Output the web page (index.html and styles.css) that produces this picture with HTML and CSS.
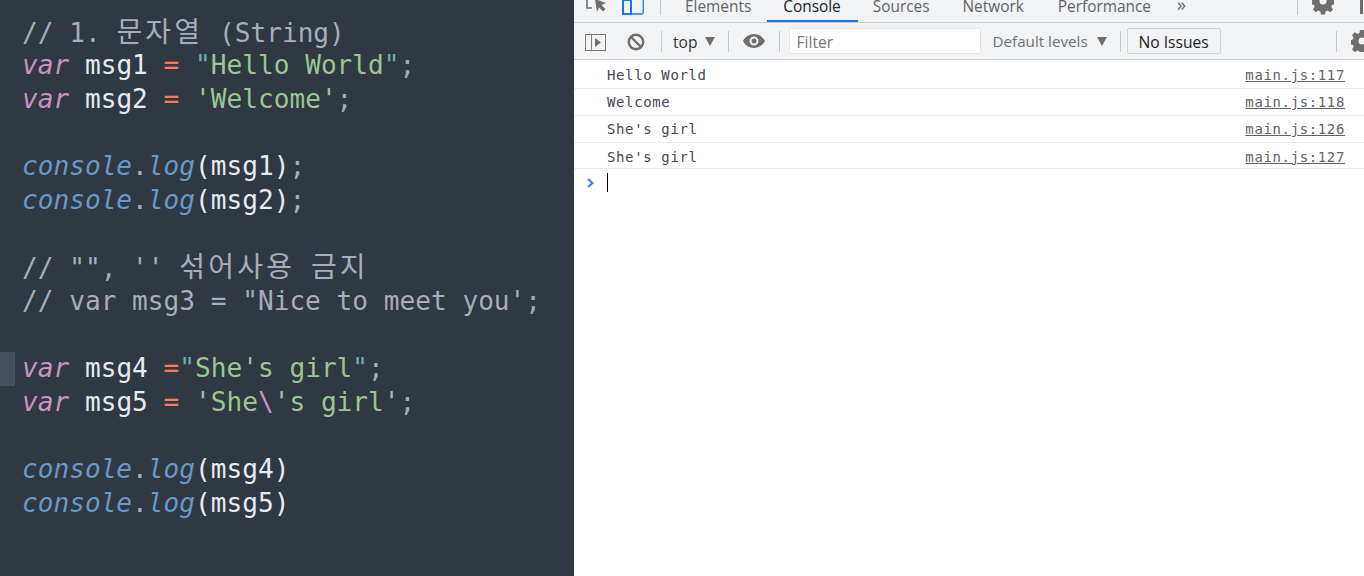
FILE: index.html
```html
<!DOCTYPE html>
<html lang="ko">
<head>
<meta charset="utf-8">
<title>Console</title>
<link rel="stylesheet" href="styles.css">
</head>
<body>
<main class="app">
<section class="editor">
<div class="line"><span class="c">// 1. <span class="ko">문자열</span> (String)</span></div>
<div class="line"><span class="k">var</span> <span class="v">msg1</span> <span class="o">=</span> <span class="q">"</span><span class="s">Hello World</span><span class="q">"</span><span class="p">;</span></div>
<div class="line"><span class="k">var</span> <span class="v">msg2</span> <span class="o">=</span> <span class="s">'Welcome'</span><span class="p">;</span></div>
<div class="line"></div>
<div class="line"><span class="f">console</span><span class="p">.</span><span class="f">log</span><span class="v">(msg1)</span><span class="p">;</span></div>
<div class="line"><span class="f">console</span><span class="p">.</span><span class="f">log</span><span class="v">(msg2)</span><span class="p">;</span></div>
<div class="line"></div>
<div class="line"><span class="c">// "", '' <span class="ko">섞어사용</span> <span class="ko">금지</span></span></div>
<div class="line"><span class="c">// var msg3 = "Nice to meet you';</span></div>
<div class="line"></div>
<div class="line mark"><span class="k">var</span> <span class="v">msg4</span> <span class="o">=</span><span class="q">"</span><span class="s">She's girl</span><span class="q">"</span><span class="p">;</span></div>
<div class="line"><span class="k">var</span> <span class="v">msg5</span> <span class="o">=</span> <span class="s">'She</span><span class="e">\</span><span class="s">'s girl'</span><span class="p">;</span></div>
<div class="line"></div>
<div class="line"><span class="f">console</span><span class="p">.</span><span class="f">log</span><span class="v">(msg4)</span></div>
<div class="line"><span class="f">console</span><span class="p">.</span><span class="f">log</span><span class="v">(msg5)</span></div>
</section>
<section class="devtools">
<header class="tabs">
<svg class="ic inspect" width="22" height="22" viewBox="0 0 22 22"><path d="M1 0v11h5" fill="none" stroke="#6e6e6e" stroke-width="1.6"/><path d="M9 2l11 4-4.500 2 4 4-2.500 2.500-4-4-2 4.500z" fill="#6e6e6e"/></svg>
<svg class="ic device" width="22" height="22" viewBox="0 0 22 22"><rect x="0.800" y="-4" width="20.400" height="19" rx="1.500" fill="none" stroke="#1a73e8" stroke-width="1.300"/><rect x="1" y="1" width="8" height="14" fill="none" stroke="#1a73e8" stroke-width="2"/></svg>
<i class="sep tall first"></i>
<span class="tab t-el">Elements</span>
<span class="tab active">Console</span>
<span class="tab t-so">Sources</span>
<span class="tab t-ne">Network</span>
<span class="tab t-pe">Performance</span>
<span class="more">»</span>
<i class="sep tall last"></i>
<svg class="ic gear" width="22" height="22" viewBox="0 0 22 22"><path fill="#6e6e6e" fill-rule="evenodd" d="M9-6h4l.6 3 2 .9 2.600-1.700 2.800 2.800-1.700 2.600.9 2 3 .6v4l-3 .6-.9 2 1.700 2.600-2.800 2.800-2.600-1.700-2 .9-.6 3H9l-.6-3-2-.9-2.600 1.700-2.800-2.800 1.700-2.600-.9-2-3-.6v-4l3-.6.9-2-1.700-2.600 2.800-2.800 2.600 1.700 2-.9zM11 1.500a3.500 3.500 0 100 7 3.500 3.500 0 000-7z"/></svg>
<span class="dots"></span>
</header>
<div class="toolbar">
<svg class="ic sidebar" width="21" height="17" viewBox="0 0 21 17"><rect x="0.500" y="0.500" width="20" height="16" fill="none" stroke="#7a7a7a"/><path d="M6.500 0v17" stroke="#7a7a7a"/><path d="M10 4l6 4.500-6 4.500z" fill="#6e6e6e"/></svg>
<svg class="ic block" width="18" height="18" viewBox="0 0 18 18"><circle cx="9" cy="9" r="7.200" fill="none" stroke="#6e6e6e" stroke-width="2.400"/><path d="M4 4l10 10" stroke="#6e6e6e" stroke-width="2.400"/></svg>
<i class="sep s1"></i>
<span class="label top">top</span>
<i class="tri t1"></i>
<i class="sep s2"></i>
<svg class="ic eye" width="22" height="14" viewBox="0 0 22 14"><path fill="#6e6e6e" fill-rule="evenodd" d="M11 0c5 0 9 3.200 11 7-2 3.800-6 7-11 7S2 10.800 0 7c2-3.800 6-7 11-7zm0 2.500a4.500 4.500 0 100 9 4.500 4.500 0 000-9zm0 2a2.500 2.500 0 110 5 2.500 2.500 0 010-5z"/></svg>
<i class="sep s3"></i>
<div class="filter">Filter</div>
<span class="label levels">Default levels</span>
<i class="tri t2"></i>
<i class="sep s4"></i>
<div class="issues">No Issues</div>
<i class="sep s5"></i>
<svg class="ic gear2" width="22" height="22" viewBox="0 0 22 22"><path fill="#6e6e6e" fill-rule="evenodd" d="M9 0h4l.6 3 2 .9 2.600-1.700 2.800 2.800-1.700 2.600.9 2 3 .6v4l-3 .6-.9 2 1.700 2.600-2.800 2.800-2.600-1.700-2 .9-.6 3H9l-.6-3-2-.9-2.600 1.700-2.800-2.800 1.700-2.600-.9-2-3-.6v-4l3-.6.9-2-1.700-2.600 2.800-2.800 2.600 1.700 2-.9zM11 7.500a3.500 3.500 0 100 7 3.500 3.500 0 000-7z"/></svg>
</div>
<div class="log">
<div class="row r1"><span>Hello World</span><a>main.js:117</a></div>
<div class="row r2"><span>Welcome</span><a>main.js:118</a></div>
<div class="row r3"><span>She's girl</span><a>main.js:126</a></div>
<div class="row r4"><span>She's girl</span><a>main.js:127</a></div>
<div class="prompt"><svg width="9" height="10" viewBox="0 0 9 10"><path d="M2 1l4.500 4L2 9" fill="none" stroke="#2f7cf0" stroke-width="2"/></svg><i class="caret"></i></div>
</div>
</section>
</main>
</body>
</html>
```
FILE: styles.css
```css
* { box-sizing: border-box; }
html, body { margin: 0; height: 100%; overflow: hidden; }
.app { display: flex; width: 1364px; height: 576px; }
.editor {
  width: 574px; flex: none; background: #303841; padding: 15.500px 0 0 22px;
  font: 26.130px/33.700px "DejaVu Sans Mono", monospace; color: #d8dee9;
}
.line { height: 33.700px; position: relative; white-space: pre; }
.mark::before { content: ""; position: absolute; left: -22px; top: 0; width: 15px; height: 34px; background: #44525b; }
.c { color: #a7adba; }
.ko { font-family: "Noto Sans CJK KR", sans-serif; font-size: 28px; letter-spacing: 3.200px; line-height: 1; }
.k { color: #c594c5; font-style: italic; }
.v { color: #e6ebf2; }
.o { color: #f97b58; }
.q { color: #5fb4b4; }
.s { color: #99c794; }
.e { color: #c594c5; }
.p { color: #a7adba; }
.f { color: #6699cc; font-style: italic; }

.devtools { flex: 1; min-width: 0; display: flex; flex-direction: column; background: #fff; font-family: "Open Sans", sans-serif; }
.tabs { height: 23px; flex: none; display: flex; background: #f1f3f4; border-bottom: 1px solid #cbcdd0; position: relative; overflow: hidden; font-size: 15.400px; color: #5f6368; }
.tab { line-height: 13px; height: 22px; white-space: nowrap; flex: none; }
.ic { flex: none; display: block; }
.inspect { margin: -3px 0 0 12px; }
.device { margin: -1px 0 0 14px; }
.sep { display: block; width: 1px; flex: none; background: #c4c6c9; }
.sep.tall { height: 15px; }
.first { margin-left: 16px; }
.t-el { margin-left: 24px; }
.active { color: #202124; padding: 0 17px 0 16px; margin-left: 16px; border-bottom: 2px solid #1a73e8; }
.t-so { margin-left: 15px; }
.t-ne { margin-left: 33px; }
.t-pe { margin-left: 34px; }
.more { margin-left: 26px; line-height: 8px; font-size: 18px; flex: none; }
.last { margin-left: 111px; }
.gear { margin: -4px 0 0 14px; }
.dots { width: 3px; height: 14px; margin-left: 26px; background: #6e6e6e; flex: none; }

.toolbar { height: 37px; flex: none; display: flex; align-items: center; background: #f1f3f4; border-bottom: 1px solid #cbcdd0; font-size: 15.600px; }
.sidebar { margin: 2px 0 0 11px; }
.block { margin: 2px 0 0 21px; }
.toolbar .sep { height: 21px; }
.s1 { margin-left: 16px; }
.label { line-height: 20px; white-space: nowrap; flex: none; }
.top { margin-left: 11px; color: #333; padding-top: 1px; }
.tri { display: block; flex: none; width: 0; height: 0; border: 5.500px solid transparent; border-top: 9px solid #6e6e6e; border-bottom: 0; }
.t1 { margin-left: 8px; }
.s2 { margin-left: 13px; }
.eye { margin-left: 14px; }
.s3 { margin-left: 14px; }
.filter { width: 192px; height: 26px; flex: none; margin-left: 9px; background: #fff; border: 1px solid #e4e5e7; border-radius: 2px; padding-left: 6px; line-height: 27px; color: #75787c; }
.levels { margin-left: 11px; color: #6e7175; font-size: 15.200px; }
.t2 { margin-left: 9px; }
.s4 { margin-left: 13px; }
.issues { width: 94px; height: 26px; flex: none; margin-left: 6px; border: 1px solid #cfd1d4; border-radius: 2px; text-align: center; line-height: 26px; color: #202124; white-space: nowrap; }
.s5 { margin-left: 115px; }
.gear2 { margin-left: 14px; }

.log { flex: 1; font: 14px "DejaVu Sans Mono", monospace; letter-spacing: .63px; color: #43494f; }
.row { display: flex; justify-content: space-between; align-items: center; padding: 0 19px 0 33px; border-bottom: 1px solid #ececec; }
.r1 { height: 29px; padding-top: 2px; }
.r2, .r3 { height: 27px; }
.r4 { height: 26px; padding-top: 2px; }
.row a { color: #5f6368; text-decoration: underline; }
.prompt { display: flex; align-items: center; height: 27px; padding-left: 12px; }
.caret { display: block; width: 1px; height: 19px; margin-left: 12px; background: #000; }
```
